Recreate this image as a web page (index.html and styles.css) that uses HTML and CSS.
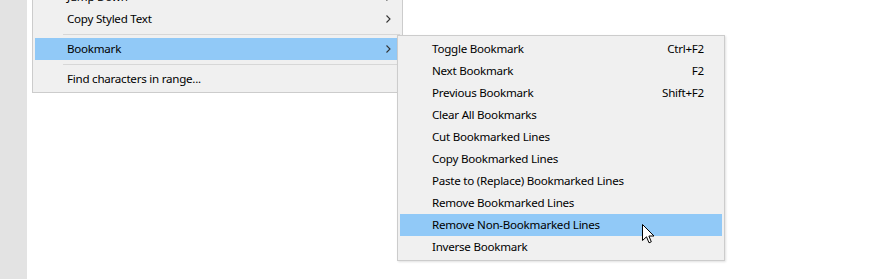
FILE: index.html
```html
<!DOCTYPE html>
<html lang="en">
<head>
  <meta charset="UTF-8">
  <title>Bookmark menu</title>
  <link rel="stylesheet" href="styles.css">
</head>
<body>
  <div class="page">
    <div class="strip"></div>
    <div class="area">
      <ul class="menu main">
        <li class="item"><span class="label">Jump Down</span><span class="arrow"><svg width="5" height="8" viewBox="0 0 5 8"><path d="M0.5 0.5 L4 4 L0.5 7.5" fill="none" stroke="#333" stroke-width="1.1"/></svg></span></li>
        <li class="item"><span class="label">Copy Styled Text</span><span class="arrow"><svg width="5" height="8" viewBox="0 0 5 8"><path d="M0.5 0.5 L4 4 L0.5 7.5" fill="none" stroke="#333" stroke-width="1.1"/></svg></span></li>
        <li class="sep"></li>
        <li class="item active"><span class="label">Bookmark</span><span class="arrow"><svg width="5" height="8" viewBox="0 0 5 8"><path d="M0.5 0.5 L4 4 L0.5 7.5" fill="none" stroke="#333" stroke-width="1.1"/></svg></span>
          <ul class="menu sub">
            <li class="item"><span class="label">Toggle Bookmark</span><span class="key">Ctrl+F2</span></li>
            <li class="item"><span class="label">Next Bookmark</span><span class="key">F2</span></li>
            <li class="item"><span class="label">Previous Bookmark</span><span class="key">Shift+F2</span></li>
            <li class="item"><span class="label">Clear All Bookmarks</span></li>
            <li class="item"><span class="label">Cut Bookmarked Lines</span></li>
            <li class="item"><span class="label">Copy Bookmarked Lines</span></li>
            <li class="item"><span class="label">Paste to (Replace) Bookmarked Lines</span></li>
            <li class="item"><span class="label">Remove Bookmarked Lines</span></li>
            <li class="item active"><span class="label">Remove Non-Bookmarked Lines</span>
              <svg class="cursor" width="13" height="21" viewBox="0 0 13 21"><path d="M0.5 0.5 L0.5 16.5 L4.5 12.8 L7 18.8 L9.3 17.8 L6.9 12 L12 12 Z" fill="#fff" stroke="#000" stroke-width="1" stroke-linejoin="miter"/></svg>
            </li>
            <li class="item"><span class="label">Inverse Bookmark</span></li>
          </ul>
        </li>
        <li class="sep"></li>
        <li class="item"><span class="label">Find characters in range...</span></li>
      </ul>
    </div>
  </div>
</body>
</html>
```

FILE: styles.css
```css
* {
  box-sizing: border-box;
}

body {
  margin: 0;
  background-color: #fff;
  font-family: "Noto Sans", "Open Sans", sans-serif;
  font-size: 11.6px;
  letter-spacing: -0.25px;
  color: #000;
  overflow: hidden;
}

.page {
  display: flex;
  height: 279px;
}

.strip {
  width: 27px;
  background-color: #e3e3e3;
}

.area {
  flex-grow: 1;
  padding-left: 5px;
}

.menu {
  list-style: none;
  margin: 0;
  background-color: #f0f0f0;
  border: 1px solid #cccccc;
  padding: 2px;
}

.main {
  width: 371px;
  margin-top: -17px;
}

.item {
  position: relative;
  display: flex;
  align-items: center;
  height: 22px;
  padding-left: 32px;
  padding-right: 9px;
  padding-bottom: 1px;
}

.item .label {
  flex-grow: 1;
  white-space: nowrap;
}

.item.active {
  background-color: #91c9f7;
}

.arrow {
  display: flex;
  align-items: center;
}

.sep {
  height: 8px;
  margin-left: 28px;
  display: flex;
  align-items: center;
}

.sep::before {
  content: "";
  flex-grow: 1;
  height: 1px;
  background-color: #d7d7d7;
}

.sub {
  position: absolute;
  left: 362px;
  top: -3px;
  width: 328px;
  box-shadow: 1px 1px 2px rgba(0, 0, 0, 0.12);
}

.sub .item {
  padding-right: 18px;
}

.key {
  white-space: nowrap;
}

.cursor {
  position: absolute;
  left: 242px;
  top: 10px;
}
```
